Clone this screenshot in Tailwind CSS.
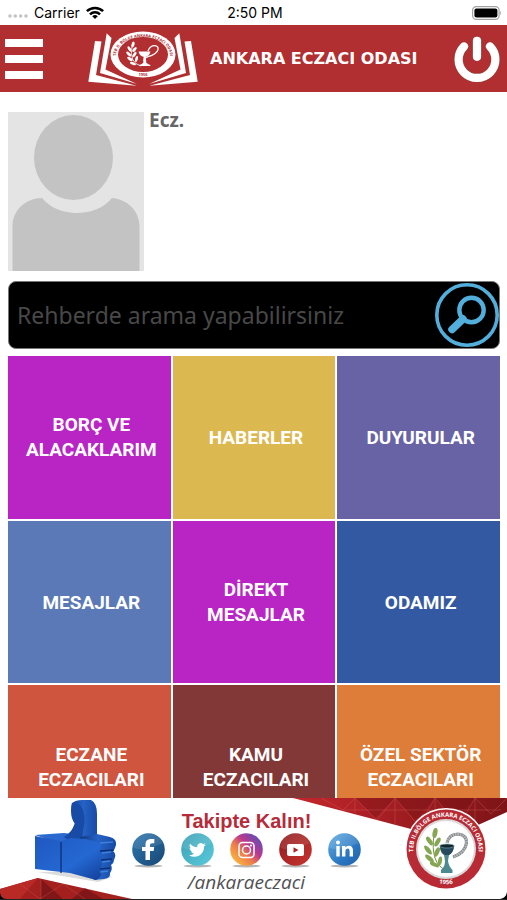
<!DOCTYPE html>
<html lang="tr">
	<head>
		<meta charset="UTF-8" />
		<meta name="viewport" content="width=device-width, initial-scale=1.0" />
		<script src="https://cdn.jsdelivr.net/npm/@tailwindcss/browser@4"></script>
		<title>Ankara Eczacı Odası</title>
	</head>
	<body class="h-screen flex flex-col bg-white overflow-hidden">
		<!-- STATUS BAR -->
		<div class="grid grid-cols-3 items-center h-[25px] pl-2 pr-[5px] shrink-0 font-['Inter',sans-serif] text-[14px] text-black">
			<div class="flex items-center gap-[6px]">
				<svg class="w-5 h-1 mt-[6px]" viewBox="0 0 20 4" fill="#c4c4c4">
					<circle cx="2" cy="2" r="1.8" />
					<circle cx="7.3" cy="2" r="1.8" />
					<circle cx="12.6" cy="2" r="1.8" />
					<circle cx="18" cy="2" r="1.8" />
				</svg>
				<span>Carrier</span>
				<svg class="w-[18px] h-[13px]" viewBox="0 0 18 13" fill="none" stroke="black" stroke-width="2.5">
					<path d="M.9 5.2a11.6 11.6 0 0116.2 0" />
					<path d="M4 8.3a7.2 7.2 0 0110 0" />
					<path d="M9 13L6.2 10.3a4 4 0 015.6 0z" fill="black" stroke="none" />
				</svg>
			</div>
			<span class="text-center">2:50 PM</span>
			<svg class="w-[30px] h-[14px] justify-self-end" viewBox="0 0 30 14">
				<rect x=".6" y=".6" width="26.5" height="12.8" rx="3.6" fill="none" stroke="#a3a3a3" stroke-width="1.2" />
				<rect x="2.4" y="2.4" width="23" height="9.2" rx="2" />
				<path d="M28.4 4.8q1.6 2.2 0 4.4z" fill="#8a8a8a" />
			</svg>
		</div>

		<!-- NAVBAR -->
		<header class="flex items-center h-[67px] pl-[5px] pr-[7px] shrink-0 bg-[#b12e31]">
			<button type="button" aria-label="Menü" class="flex flex-col gap-2 w-[38px] cursor-pointer">
				<span class="w-full h-2 bg-white"></span>
				<span class="w-full h-2 bg-white"></span>
				<span class="w-full h-2 bg-white"></span>
			</button>
			<svg class="w-[110px] h-[56px] ml-[45px]" viewBox="0 0 110 56" fill="white">
				<path d="M7 10l6.500.4L8 44 48.700 54.700.3 50.700z" />
				<path d="M18.700 2.300L23.500 7l-6 31.500L49 53 12 42z" />
				<path d="M103 10l-6.500.4L102 44 61.300 54.700l48.400-4z" />
				<path d="M91.300 2.300L86.500 7l6 31.500L61 53l37-11z" />
				<ellipse cx="55" cy="23.500" rx="33.500" ry="24" fill="#b12e31" />
				<ellipse cx="55" cy="23.500" rx="32.500" ry="23" />
				<ellipse cx="55" cy="23.500" rx="25" ry="17.500" fill="#b12e31" />
				<path id="navTop" d="M28.500 28a27 18.500 0 1153 0" fill="none" />
				<text class="font-['Open_Sans',sans-serif] font-bold" font-size="4" fill="#b12e31">
					<textPath href="#navTop" startOffset="50%" text-anchor="middle">TEB II. BÖLGE ANKARA ECZACI ODASI</textPath>
				</text>
				<text x="55" y="45" text-anchor="middle" font-size="4" class="font-['Open_Sans',sans-serif] font-bold" fill="#b12e31">1956</text>
				<path d="M50.500 20.500h12q-1.500 5-4.700 5.300l.5 6q1.500 1.500 4 2.200v1h-11v-1q3-.8 4-2.200l.3-6q-3.800-.5-5.100-5.300z" />
				<path d="M60 20q2-5.500 7-5.300 4.500.8 2.600 5-2.500 4.300-9.600 6-6 2-3 5.300" fill="none" stroke="white" stroke-width="1.300" />
				<path d="M53 35q-12-3-9-20" fill="none" stroke="white" stroke-width=".8" />
				<g>
					<ellipse cx="45" cy="13.500" rx="1.500" ry="3" transform="rotate(18 45 13.500)" />
					<ellipse cx="41.500" cy="18" rx="1.400" ry="3" transform="rotate(-35 41.500 18)" />
					<ellipse cx="46.500" cy="18.500" rx="1.400" ry="3" transform="rotate(40 46.500 18.500)" />
					<ellipse cx="40.800" cy="23" rx="1.400" ry="3.200" transform="rotate(-45 40.800 23)" />
					<ellipse cx="46.500" cy="23.500" rx="1.400" ry="3" transform="rotate(35 46.500 23.500)" />
					<ellipse cx="42" cy="28" rx="1.400" ry="3.200" transform="rotate(-55 42 28)" />
					<ellipse cx="48.500" cy="28" rx="1.400" ry="3" transform="rotate(15 48.500 28)" />
					<ellipse cx="45" cy="32.500" rx="1.400" ry="3.200" transform="rotate(-70 45 32.500)" />
				</g>
			</svg>
			<h1 class="ml-3 font-['DejaVu_Sans',sans-serif] font-bold text-[16px] text-white whitespace-nowrap">ANKARA ECZACI ODASI</h1>
			<button type="button" aria-label="Çıkış" class="ml-auto cursor-pointer">
				<svg class="w-[46px] h-[46px] overflow-visible" viewBox="0 0 46 46" fill="none" stroke-linecap="round">
					<g stroke="#8d4a3f" stroke-width="9.200">
						<path d="M23 4.800v16" />
						<path d="M10 10.500a18.400 18.400 0 1026 0" />
					</g>
					<g stroke="white" stroke-width="8.200">
						<path d="M23 4.800v16" />
						<path d="M10 10.500a18.400 18.400 0 1026 0" />
					</g>
				</svg>
			</button>
		</header>

		<main class="flex-1 min-h-0 overflow-hidden pl-2 pr-[7px] pt-5">
			<!-- Profile -->
			<div class="flex gap-[5px]">
				<svg class="w-[136px] h-[159px] bg-[#e4e4e4]" viewBox="0 0 136 159" fill="#c3c3c3">
					<ellipse cx="65.500" cy="45.500" rx="39.500" ry="42.500" />
					<path d="M4.500 159V114C4.500 98 18 86 34 86 50 106 88 106 104 86 119 87 131.500 99 131.500 114V159z" />
				</svg>
				<p class="font-['Noto_Sans',sans-serif] font-bold text-[19px] leading-4 text-[#666]">Ecz.</p>
			</div>

			<!-- Search -->
			<form class="flex items-center h-[68px] mt-[10px] rounded-lg border border-[#777] bg-black">
				<input
					id="search"
					type="search"
					aria-label="Rehberde arama yapabilirsiniz"
					placeholder="Rehberde arama yapabilirsiniz"
					class="flex-1 min-w-0 h-full pl-2 bg-transparent outline-none font-['Noto_Sans',sans-serif] text-[23px] text-white placeholder:text-[#484848]"
				/>
				<button type="button" aria-label="Ara" class="cursor-pointer">
					<svg class="w-16 h-16" viewBox="0 0 64 64" fill="none" stroke="#52aedb">
						<circle cx="32" cy="32" r="30.200" stroke-width="3.600" />
						<circle cx="36.500" cy="27" r="12.200" stroke-width="4.400" />
						<path d="M28 36L17 46.500" stroke-width="7.500" stroke-linecap="round" />
					</svg>
				</button>
			</form>

			<!-- Menu tiles -->
			<nav class="grid grid-cols-3 gap-[2px] mt-[7px] font-['Roboto',sans-serif] font-bold text-[19px] leading-[25px] text-center text-white">
				<a href="#" class="aspect-square flex items-center justify-center pl-4 pr-3 bg-[#b925c5]">BORÇ VE ALACAKLARIM</a>
				<a href="#" class="aspect-square flex items-center justify-center pl-4 pr-3 bg-[#dcb850]">HABERLER</a>
				<a href="#" class="aspect-square flex items-center justify-center pl-4 pr-3 bg-[#6863a5]">DUYURULAR</a>
				<a href="#" class="aspect-square flex items-center justify-center pl-4 pr-3 bg-[#5a79b6]">MESAJLAR</a>
				<a href="#" class="aspect-square flex items-center justify-center pl-4 pr-3 bg-[#b925c5]">DİREKT MESAJLAR</a>
				<a href="#" class="aspect-square flex items-center justify-center pl-4 pr-3 bg-[#3459a3]">ODAMIZ</a>
				<a href="#" class="aspect-square flex items-center justify-center pl-4 pr-3 bg-[#cf553f]">ECZANE ECZACILARI</a>
				<a href="#" class="aspect-square flex items-center justify-center pl-4 pr-3 bg-[#833838]">KAMU ECZACILARI</a>
				<a href="#" class="aspect-square flex items-center justify-center pl-4 pr-3 bg-[#de7c39]">ÖZEL SEKTÖR ECZACILARI</a>
			</nav>
		</main>

		<!-- Social footer -->
		<footer class="relative flex h-[102px] pl-[34px] pr-5 shrink-0 bg-white border-b border-[#222]">
			<!-- red corners -->
			<svg class="absolute right-0 top-0 w-[214px] h-[36px]" viewBox="0 0 214 36">
				<defs>
					<linearGradient id="redTop" x1="0" x2="1">
						<stop offset="0" stop-color="#c5262d" />
						<stop offset=".5" stop-color="#a01d21" />
						<stop offset="1" stop-color="#7d1417" />
					</linearGradient>
				</defs>
				<path d="M0 0H214V14L165 36 118 31z" fill="url(#redTop)" />
				<path d="M62 0l20 20L102 0zM102 0l20 22 20-22zM142 0l20 22 20-22z" fill="#6d1013" opacity=".35" />
				<path d="M28 0l22 12L62 0l22 22L102 0l24 28L142 0l24 28L182 0l16 16L214 0M50 12h158M62 0v15M102 0v26M142 0v30M182 0v22" fill="none" stroke="#d8655f" stroke-width=".7" opacity=".5" />
			</svg>
			<svg class="absolute left-0 bottom-0 w-[132px] h-[22px]" viewBox="0 0 132 22">
				<path d="M0 12L38 1 132 22H0z" fill="#a3201f" />
				<path d="M0 12L38 1 20 22H0z" fill="#b92926" />
				<path d="M41 2l22 20H41zM85 11l18 11H72z" fill="#6b1114" opacity=".6" />
				<path d="M41 2v20M20 7l20 15L63 7l22 15" fill="none" stroke="#d8655f" stroke-width=".6" opacity=".5" />
				<path d="M0 16q1 6 7 6H0z" />
			</svg>
			<svg class="absolute right-0 bottom-0 w-[7px] h-[7px]" viewBox="0 0 7 7">
				<path d="M7 0Q6 6 0 7h7z" />
			</svg>

			<svg class="relative w-[84px] h-[84px] mt-[2px]" viewBox="0 0 84 84">
				<defs>
					<linearGradient id="thumbFront" x1="0" y1="0" x2="1" y2="1">
						<stop offset="0" stop-color="#1f58bf" />
						<stop offset=".6" stop-color="#2468d3" />
						<stop offset="1" stop-color="#123f97" />
					</linearGradient>
					<linearGradient id="thumbSide" x1="0" x2="1">
						<stop offset="0" stop-color="#12387f" />
						<stop offset=".5" stop-color="#2563c6" />
						<stop offset="1" stop-color="#174ba6" />
					</linearGradient>
				</defs>
				<path d="M4 72l60 10 14-5-12-6z" fill="#9c9c9c" opacity=".35" />
				<path d="M1 35l29-2 8 1 4-4 4 12-18 2z" fill="#2a69cf" />
				<path d="M38 3Q42 0 48 0l9 0q6 3 6 14v21l-14 6-14-4 6-14-3-12z" fill="url(#thumbSide)" />
				<path d="M38 3q8-1 11 7 3 11 0 20l-1 9-14 1-4-3q8-5 11-13-4-5-4-13 0-6 1-8z" fill="#184ba6" />
				<path d="M46 37l17-3 13 3q7 2 6 8-1 4-3 6 4 3 1 9 0 3-3 5 2 4-1 8 1 5-6 6l-10 1z" fill="url(#thumbSide)" />
				<path d="M1 36l26 5 10-3 15 1 12 3q5 4 1 9 6 4 1 9 4 4 0 9 3 6-1 9l-3 2-26-7L1 69z" fill="url(#thumbFront)" />
				<path d="M66 51l14-1M67 60l11-1M66 69l10-1M27 42v31" fill="none" stroke="#0d2f75" stroke-width="1.300" />
				<path d="M66 43l13-1M68 53l9-1M68 62l8-1M66 72l8-1" fill="none" stroke="#3d80de" stroke-width="1.300" />
			</svg>

			<div class="relative flex flex-col items-center ml-[14px] pt-[11px]">
				<h2 class="font-['Liberation_Sans',sans-serif] font-bold text-[20px] leading-6 text-[#b72b39]">Takipte Kalın!</h2>
				<div class="flex gap-4">
					<a href="#" aria-label="Facebook">
						<svg class="w-[33px] h-[35px]" viewBox="0 0 33 35">
							<linearGradient id="fb" x1="0" y1="0" x2="1" y2="1">
								<stop offset="0" stop-color="#2d78b0" />
								<stop offset="1" stop-color="#174775" />
							</linearGradient>
							<ellipse cx="16.500" cy="33" rx="14" ry="1.500" fill="#b5b5b5" />
							<circle cx="16.500" cy="16.500" r="16.300" fill="url(#fb)" />
							<path d="M1 14Q8 20 31 10 27 1 16.500.2 3 1 1 14z" fill="white" opacity=".1" />
							<path d="M13.500 27V18H10v-4h3.500v-2.800q0-5 5-5.200h3.800v4.200h-2.300q-2 0-2 1.800v2h4.200l-.6 4H18v9z" fill="white" />
						</svg>
					</a>
					<a href="#" aria-label="Twitter">
						<svg class="w-[33px] h-[35px]" viewBox="0 0 33 35">
							<linearGradient id="tw" x1="0" y1="0" x2="1" y2="1">
								<stop offset="0" stop-color="#3a9fb5" />
								<stop offset="1" stop-color="#5bcbdc" />
							</linearGradient>
							<ellipse cx="16.500" cy="33" rx="14" ry="1.500" fill="#b5b5b5" />
							<circle cx="16.500" cy="16.500" r="16.300" fill="url(#tw)" />
							<path d="M1 14Q8 20 31 10 27 1 16.500.2 3 1 1 14z" fill="white" opacity=".1" />
							<path transform="translate(8 8.500) scale(.7)" fill="white" d="M23.950 4.570a10 10 0 01-2.820.77 4.960 4.960 0 002.160-2.720c-.95.550-2 .95-3.130 1.180a4.920 4.920 0 00-8.380 4.480A13.930 13.930 0 011.640 3.160a4.920 4.920 0 001.520 6.570 4.900 4.900 0 01-2.230-.610v.060a4.920 4.920 0 003.950 4.830 5 5 0 01-2.210.080 4.940 4.940 0 004.600 3.420A9.870 9.870 0 010 19.540a13.990 13.990 0 007.550 2.210c9.050 0 14-7.500 14-13.980l-.02-.64a9.940 9.940 0 002.420-2.560z" />
						</svg>
					</a>
					<a href="#" aria-label="Instagram">
						<svg class="w-[33px] h-[35px]" viewBox="0 0 33 35">
							<linearGradient id="ig" x1="0" y1="1" x2="1" y2="0">
								<stop offset=".1" stop-color="#f9bb3f" />
								<stop offset=".4" stop-color="#ee7b4a" />
								<stop offset=".6" stop-color="#b9388f" />
								<stop offset=".9" stop-color="#5b50b8" />
							</linearGradient>
							<ellipse cx="16.500" cy="33" rx="14" ry="1.500" fill="#b5b5b5" />
							<circle cx="16.500" cy="16.500" r="16.300" fill="url(#ig)" />
							<g fill="none" stroke="white" stroke-width="1.500">
								<rect x="9" y="9.500" width="15" height="15" rx="3.500" />
								<circle cx="16.500" cy="17" r="4" />
							</g>
							<circle cx="21" cy="12.600" r="1.100" fill="white" />
						</svg>
					</a>
					<a href="#" aria-label="YouTube">
						<svg class="w-[33px] h-[35px]" viewBox="0 0 33 35">
							<linearGradient id="yt" x1="0" y1="0" x2="1" y2="1">
								<stop offset="0" stop-color="#8f1c1f" />
								<stop offset="1" stop-color="#c9332f" />
							</linearGradient>
							<ellipse cx="16.500" cy="33" rx="14" ry="1.500" fill="#b5b5b5" />
							<circle cx="16.500" cy="16.500" r="16.300" fill="url(#yt)" />
							<path d="M1 14Q8 20 31 10 27 1 16.500.2 3 1 1 14z" fill="white" opacity=".1" />
							<rect x="8" y="11" width="17" height="12" rx="2" fill="white" />
							<path d="M14.500 14.200v5.600l5-2.800z" fill="#a92626" />
						</svg>
					</a>
					<a href="#" aria-label="LinkedIn">
						<svg class="w-[33px] h-[35px]" viewBox="0 0 33 35">
							<linearGradient id="li" x1="0" y1="0" x2="1" y2="1">
								<stop offset="0" stop-color="#62aee2" />
								<stop offset=".6" stop-color="#2b78c2" />
								<stop offset="1" stop-color="#2060ad" />
							</linearGradient>
							<ellipse cx="16.500" cy="33" rx="14" ry="1.500" fill="#b5b5b5" />
							<circle cx="16.500" cy="16.500" r="16.300" fill="url(#li)" />
							<path d="M1 14Q8 20 31 10 27 1 16.500.2 3 1 1 14z" fill="white" opacity=".12" />
							<circle cx="10" cy="9.600" r="2" fill="white" />
							<path d="M8.300 13h3.400v10.500H8.300zM14 13h3.300v1.500q1.200-1.800 3.600-1.800 4.100 0 4.100 4.800v6h-3.400v-5.600q0-2.300-1.900-2.300-2.300 0-2.300 2.500v5.400H14z" fill="white" />
						</svg>
					</a>
				</div>
				<p class="font-['Open_Sans',sans-serif] italic font-medium text-[19px] leading-7 text-[#505052]">/ankaraeczaci</p>
			</div>

			<svg class="relative w-[82px] h-[84px] mt-2 ml-auto" viewBox="0 0 82 84">
				<circle cx="41" cy="43" r="41" fill="white" />
				<circle cx="41" cy="43" r="39.500" fill="#b82b35" />
				<circle cx="41" cy="43" r="30" fill="#dadada" />
				<circle cx="41" cy="43" r="28" fill="white" />
				<path id="sealTop" d="M8.500 47a32.700 32.700 0 1165 0" fill="none" />
				<path id="sealBottom" d="M23 73.500a37.500 37.500 0 0036 0" fill="none" />
				<g class="font-['Open_Sans',sans-serif] font-bold" fill="white" text-anchor="middle">
					<text font-size="6"><textPath href="#sealTop" startOffset="50%">TEB II.BÖLGE ANKARA ECZACI ODASI</textPath></text>
					<text font-size="6"><textPath href="#sealBottom" startOffset="50%">1956</textPath></text>
				</g>
				<path d="M41 64Q25 58 29 28" fill="none" stroke="#6f9440" stroke-width="1" />
				<g fill="#86a653">
					<ellipse cx="30" cy="27" rx="2.400" ry="5" transform="rotate(12 30 27)" />
					<ellipse cx="24.500" cy="35" rx="2.200" ry="5" transform="rotate(-35 24.500 35)" />
					<ellipse cx="32.500" cy="36" rx="2.200" ry="5" transform="rotate(30 32.500 36)" />
					<ellipse cx="23" cy="44" rx="2.200" ry="5.500" transform="rotate(-40 23 44)" />
					<ellipse cx="32" cy="46" rx="2.200" ry="5" transform="rotate(25 32 46)" />
					<ellipse cx="24.500" cy="52.500" rx="2.200" ry="5.500" transform="rotate(-50 24.500 52.500)" />
					<ellipse cx="35" cy="55" rx="2" ry="4.500" transform="rotate(10 35 55)" />
					<ellipse cx="29.500" cy="58.500" rx="2" ry="5" transform="rotate(-65 29.500 58.500)" />
				</g>
				<path d="M42 37q2-9 11-9 9 1 8.500 9Q60 47 48 51" fill="none" stroke="#85898b" stroke-width="3.200" />
				<path d="M42 37q2-9 11-9 9 1 8.500 9Q60 47 48 51" fill="none" stroke="#b9bdbe" stroke-width="2.200" stroke-dasharray="1.500 1" />
				<path d="M35 40h14q-1 7-5 9l-1 6q1 6 4.500 9v3H36v-3q4-3 4-9l-1-6q-4-2-4-9z" fill="#4c8990" />
				<path d="M35 41q1 6 5 8h4q4-2 5-8z" fill="#274a5c" />
				<ellipse cx="42" cy="40" rx="7.300" ry="2" fill="#14262e" stroke="#7fb4b8" stroke-width=".6" />
			</svg>
		</footer>
	</body>
</html>
